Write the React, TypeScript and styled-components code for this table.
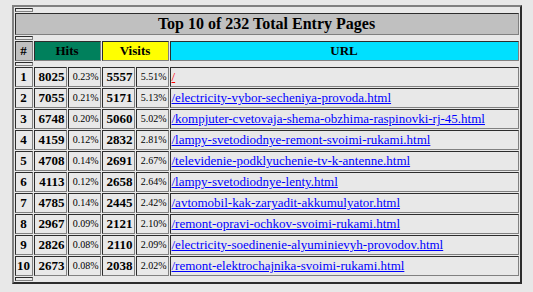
import React from "react";
import styled, { createGlobalStyle } from "styled-components";

const GlobalStyle = createGlobalStyle`
  html, body {
    background: #e8e8e8;
  }
  body {
    margin: 5px 8px 0;
    color: #000;
    font-family: "Liberation Serif", "Times New Roman", serif;
  }
`;

const Page = styled.div`
  display: flex;
  justify-content: center;
`;

const StatsTable = styled.table`
  width: 510px;
  table-layout: fixed;
  border-collapse: separate;
  border-spacing: 1px;
  border: 2px outset grey;
  font-family: "Liberation Serif", "Times New Roman", serif;
  font-size: 16px;
`;

const Cell = styled.td`
  border: 1px inset grey;
  padding: 1px;
  white-space: nowrap;
  overflow: hidden;
  font-family: "Liberation Serif", "Times New Roman", serif;
`;

const SpacerCell = styled(Cell).attrs({ as: "th" })`
  height: 0;
  padding: 1px;
`;

const TitleCell = styled(Cell).attrs({ as: "th" })`
  background: #c0c0c0;
  text-align: center;
  font-weight: bold;
  font-size: 16px;
  line-height: 18px;
`;

const HeadCell = styled(Cell).attrs({ as: "th" })<{ $bg: string }>`
  background: ${(p) => p.$bg};
  text-align: center;
  font-weight: bold;
  font-size: 13px;
  line-height: 16px;
`;

const RankCell = styled(Cell)`
  text-align: center;
  font-weight: bold;
  font-size: 13px;
  line-height: 16px;
`;

const CountCell = styled(Cell)`
  text-align: right;
  font-weight: bold;
  font-size: 13px;
  line-height: 16px;
`;

const PctCell = styled(Cell)`
  text-align: right;
  font-size: 10px;
  line-height: 16px;
`;

const UrlCell = styled(Cell)`
  text-align: left;
  font-size: 13px;
  line-height: 16px;
`;

const PageLink = styled.a<{ $visited?: boolean }>`
  color: ${(p) => (p.$visited ? "#ff0000" : "#0000ff")};
  text-decoration: underline;
`;

type Entry = {
  hits: number;
  hitsPct: string;
  visits: number;
  visitsPct: string;
  url: string;
  visited?: boolean;
};

const entries: Entry[] = [
  { hits: 8025, hitsPct: "0.23%", visits: 5557, visitsPct: "5.51%", url: "/", visited: true },
  { hits: 7055, hitsPct: "0.21%", visits: 5171, visitsPct: "5.13%", url: "/electricity-vybor-secheniya-provoda.html" },
  { hits: 6748, hitsPct: "0.20%", visits: 5060, visitsPct: "5.02%", url: "/kompjuter-cvetovaja-shema-obzhima-raspinovki-rj-45.html" },
  { hits: 4159, hitsPct: "0.12%", visits: 2832, visitsPct: "2.81%", url: "/lampy-svetodiodnye-remont-svoimi-rukami.html" },
  { hits: 4708, hitsPct: "0.14%", visits: 2691, visitsPct: "2.67%", url: "/televidenie-podklyuchenie-tv-k-antenne.html" },
  { hits: 4113, hitsPct: "0.12%", visits: 2658, visitsPct: "2.64%", url: "/lampy-svetodiodnye-lenty.html" },
  { hits: 4785, hitsPct: "0.14%", visits: 2445, visitsPct: "2.42%", url: "/avtomobil-kak-zaryadit-akkumulyator.html" },
  { hits: 2967, hitsPct: "0.09%", visits: 2121, visitsPct: "2.10%", url: "/remont-opravi-ochkov-svoimi-rukami.html" },
  { hits: 2826, hitsPct: "0.08%", visits: 2110, visitsPct: "2.09%", url: "/electricity-soedinenie-alyuminievyh-provodov.html" },
  { hits: 2673, hitsPct: "0.08%", visits: 2038, visitsPct: "2.02%", url: "/remont-elektrochajnika-svoimi-rukami.html" },
];

const Spacer = () => (
  <tr>
    <SpacerCell />
  </tr>
);

export default function App() {
  return (
    <>
      <GlobalStyle />
      <Page>
        <StatsTable>
          <colgroup>
            <col style={{ width: 18 }} />
            <col style={{ width: 33 }} />
            <col style={{ width: 33 }} />
            <col style={{ width: 33 }} />
            <col style={{ width: 33 }} />
            <col />
          </colgroup>
          <tbody>
            <Spacer />
            <tr>
              <TitleCell colSpan={6}>Top 10 of 232 Total Entry Pages</TitleCell>
            </tr>
            <Spacer />
            <tr>
              <HeadCell $bg="#c0c0c0">#</HeadCell>
              <HeadCell $bg="#00805c" colSpan={2}>Hits</HeadCell>
              <HeadCell $bg="#ffff00" colSpan={2}>Visits</HeadCell>
              <HeadCell $bg="#00e0ff">URL</HeadCell>
            </tr>
            <Spacer />
            {entries.map((e, i) => (
              <tr key={e.url}>
                <RankCell>{i + 1}</RankCell>
                <CountCell>{e.hits}</CountCell>
                <PctCell>{e.hitsPct}</PctCell>
                <CountCell>{e.visits}</CountCell>
                <PctCell>{e.visitsPct}</PctCell>
                <UrlCell>
                  <PageLink href={e.url} $visited={e.visited}>
                    {e.url}
                  </PageLink>
                </UrlCell>
              </tr>
            ))}
            <Spacer />
          </tbody>
        </StatsTable>
      </Page>
    </>
  );
}
